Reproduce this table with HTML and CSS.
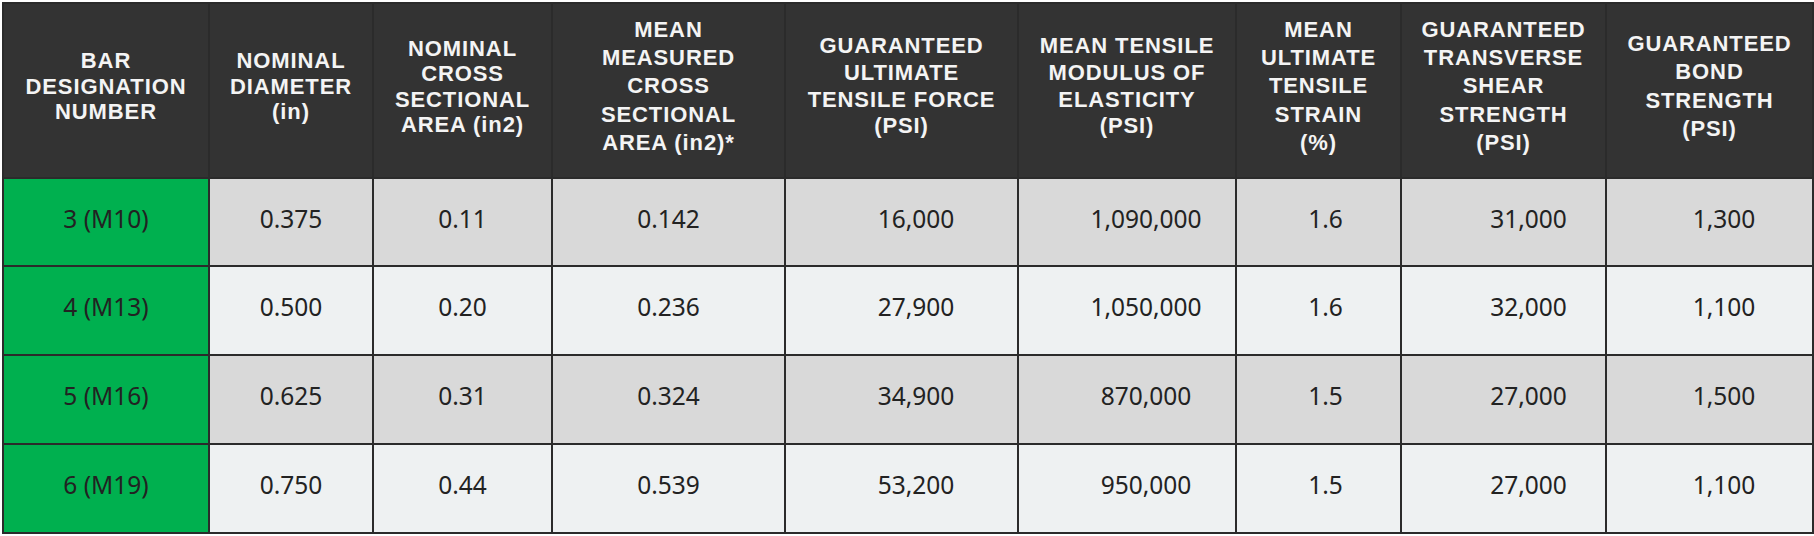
FILE: index.html
```html
<!DOCTYPE html>
<html lang="en">
<head>
<meta charset="utf-8">
<title>GFRP Bar Properties</title>
<link rel="stylesheet" href="styles.css">
</head>
<body>
<table class="spec">
  <colgroup>
    <col class="c1"><col class="c2"><col class="c3"><col class="c4"><col class="c5">
    <col class="c6"><col class="c7"><col class="c8"><col class="c9">
  </colgroup>
  <thead>
    <tr>
      <th class="lh-a">BAR<br>DESIGNATION<br>NUMBER</th>
      <th class="lh-a">NOMINAL<br>DIAMETER<br>(in)</th>
      <th class="lh-a">NOMINAL<br>CROSS<br>SECTIONAL<br>AREA (in2)</th>
      <th class="lh-c">MEAN<br>MEASURED<br>CROSS<br>SECTIONAL<br>AREA (in2)*</th>
      <th class="lh-b">GUARANTEED<br>ULTIMATE<br>TENSILE FORCE<br>(PSI)</th>
      <th class="lh-b">MEAN TENSILE<br>MODULUS OF<br>ELASTICITY<br>(PSI)</th>
      <th class="lh-c">MEAN<br>ULTIMATE<br>TENSILE<br>STRAIN<br>(%)</th>
      <th class="lh-c">GUARANTEED<br>TRANSVERSE<br>SHEAR<br>STRENGTH<br>(PSI)</th>
      <th class="lh-c">GUARANTEED<br>BOND<br>STRENGTH<br>(PSI)</th>
    </tr>
  </thead>
  <tbody>
    <tr class="odd first">
      <td class="bar">3 (M10)</td><td>0.375</td><td>0.11</td><td>0.142</td>
      <td class="p5">16,000</td><td class="p6">1,090,000</td><td class="p7">1.6</td>
      <td class="p8">31,000</td><td class="p9">1,300</td>
    </tr>
    <tr class="even">
      <td class="bar">4 (M13)</td><td>0.500</td><td>0.20</td><td>0.236</td>
      <td class="p5">27,900</td><td class="p6">1,050,000</td><td class="p7">1.6</td>
      <td class="p8">32,000</td><td class="p9">1,100</td>
    </tr>
    <tr class="odd">
      <td class="bar">5 (M16)</td><td>0.625</td><td>0.31</td><td>0.324</td>
      <td class="p5">34,900</td><td class="p6">870,000</td><td class="p7">1.5</td>
      <td class="p8">27,000</td><td class="p9">1,500</td>
    </tr>
    <tr class="even">
      <td class="bar">6 (M19)</td><td>0.750</td><td>0.44</td><td>0.539</td>
      <td class="p5">53,200</td><td class="p6">950,000</td><td class="p7">1.5</td>
      <td class="p8">27,000</td><td class="p9">1,100</td>
    </tr>
  </tbody>
</table>
</body>
</html>
```

FILE: styles.css
```css
html, body {
  margin: 0;
  padding: 0;
  background: #ffffff;
}

body {
  padding: 2px 0 0 2px;
}

.spec {
  border-collapse: collapse;
  table-layout: fixed;
  width: 1810px;
  border: 2px solid #2b2b2b;
}

.c1 { width: 206px; }
.c2 { width: 164px; }
.c3 { width: 179px; }
.c4 { width: 233px; }
.c5 { width: 233px; }
.c6 { width: 218px; }
.c7 { width: 165px; }
.c8 { width: 205px; }
.c9 { width: 207px; }

.spec th,
.spec td {
  border: 2px solid #2b2b2b;
  text-align: center;
  vertical-align: middle;
  padding: 0;
}

.spec thead tr {
  height: 175px;
}

.spec th {
  background: #333333;
  color: #f4f4f4;
  font-family: "Liberation Sans", Arial, sans-serif;
  font-weight: bold;
  font-size: 22px;
  letter-spacing: 0.9px;
  padding-bottom: 8px;
}

.spec th.lh-a { line-height: 25.5px; }
.spec th.lh-b { line-height: 26.8px; }
.spec th.lh-c { line-height: 28.3px; }

.spec tbody tr {
  height: 89px;
}

.spec tbody tr.first {
  height: 88px;
}

.spec td {
  font-family: "Noto Sans", "Open Sans", sans-serif;
  font-size: 24.5px;
  color: #222222;
  line-height: 30px;
  padding-bottom: 7px;
}

.spec .odd td { background: #d9d9d9; }
.spec .even td { background: #eef1f2; }

.spec td.bar {
  background: #00b04f;
}

.spec td.p5 { padding-left: 29px; }
.spec td.p6 { padding-left: 38px; }
.spec td.p7 { padding-left: 14px; }
.spec td.p8 { padding-left: 50px; }
.spec td.p9 { padding-left: 29px; }
```
